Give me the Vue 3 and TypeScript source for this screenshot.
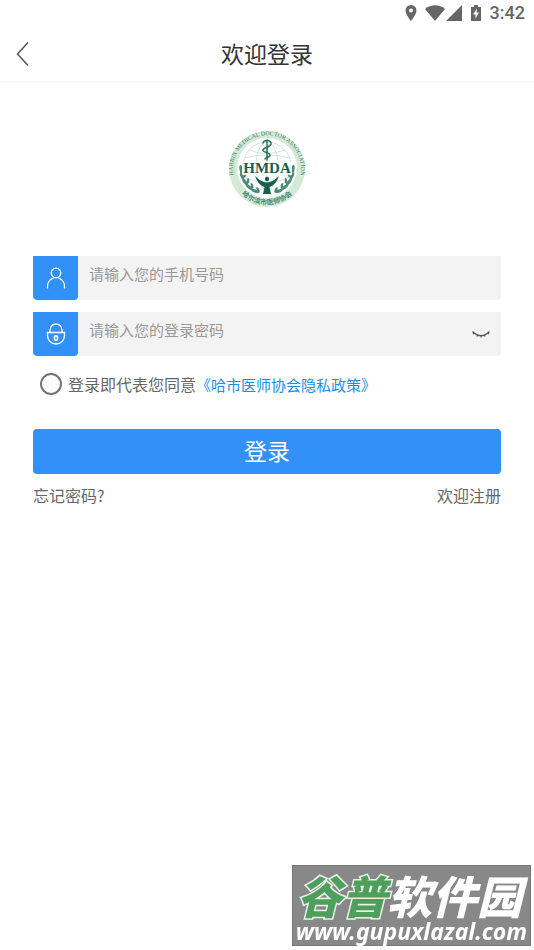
<script setup lang="ts">
import { ref } from 'vue'

const phone = ref('')
const password = ref('')
const agreed = ref(false)
const showPassword = ref(false)

const laurel = [
  { x: 14, y: 40, r: -8 },
  { x: 15, y: 47, r: -22 },
  { x: 18, y: 53, r: -38 },
  { x: 22, y: 58, r: -52 },
  { x: 28, y: 62, r: -68 },
]
</script>

<template>
  <div class="page">
    <div class="status">
      <svg class="pin" viewBox="0 0 12 16" aria-hidden="true">
        <path fill-rule="evenodd" d="M6 0a5.500 5.500 0 0 0-5.500 5.500C.5 9.500 6 16 6 16s5.500-6.500 5.500-10.500A5.500 5.500 0 0 0 6 0zm0 3.600a2 2 0 1 1 0 4 2 2 0 0 1 0-4z" />
      </svg>
      <svg class="wifi" viewBox="0 0 20 16" aria-hidden="true"><path d="M0 4C5.500-1 14.500-1 20 4L10 16z" /></svg>
      <svg class="cell" viewBox="0 0 16 16" aria-hidden="true"><path d="M16 0v16H0z" /></svg>
      <svg class="battery" viewBox="0 0 10 16" aria-hidden="true">
        <path fill-rule="evenodd" d="M3 0h4v2h3v14H0V2h3zM6 3.500L2 9.500h2.500v4L8 7.500H5.500z" />
      </svg>
      <span>3:42</span>
    </div>

    <header class="header">
      <button class="back" type="button" aria-label="返回">
        <svg viewBox="0 0 14 26" aria-hidden="true"><path d="M12 1.500L1.500 13 12 24.500" /></svg>
      </button>
      <h1>欢迎登录</h1>
    </header>

    <main class="content">
      <svg class="logo" viewBox="0 0 80 80" role="img" aria-label="HMDA">
        <defs>
          <path id="ring-top" d="M10.400 57A34 34 0 1 1 69.600 57" />
          <path id="ring-bottom" d="M9 58A36 36 0 0 0 71 58" />
        </defs>
        <circle cx="40" cy="40" r="38" fill="#d4ead7" />
        <circle cx="40" cy="39" r="30" fill="#fff" />
        <g fill="none" stroke="#c8dcd4" stroke-width=".8">
          <circle cx="40" cy="37" r="24" />
          <ellipse cx="40" cy="37" rx="11" ry="24" />
          <path d="M40 13v48M17 29q23-6 46 0M16 38h48M20 50q20 6 40 0M22 21q18 7 36 0" />
        </g>
        <text class="ring-text"><textPath href="#ring-top" startOffset="50%" text-anchor="middle">HARBIN MEDICAL DOCTOR ASSOCIATION</textPath></text>
        <text class="ring-cn"><textPath href="#ring-bottom" startOffset="50%" text-anchor="middle">哈尔滨市医师协会</textPath></text>
        <g fill="#4b8b75">
          <g v-for="leaf in laurel" :key="leaf.y">
            <ellipse :cx="leaf.x" :cy="leaf.y" rx="1.600" ry="4" :transform="`rotate(${leaf.r} ${leaf.x} ${leaf.y})`" />
            <ellipse :cx="leaf.x + 3" :cy="leaf.y - 1" rx="1.300" ry="3" :transform="`rotate(${leaf.r + 45} ${leaf.x + 3} ${leaf.y - 1})`" />
            <ellipse :cx="80 - leaf.x" :cy="leaf.y" rx="1.600" ry="4" :transform="`rotate(${-leaf.r} ${80 - leaf.x} ${leaf.y})`" />
            <ellipse :cx="77 - leaf.x" :cy="leaf.y - 1" rx="1.300" ry="3" :transform="`rotate(${-leaf.r - 45} ${77 - leaf.x} ${leaf.y - 1})`" />
          </g>
        </g>
        <g fill="none" stroke="#2a7561" stroke-width="1.500" stroke-linecap="round">
          <path d="M40 11v20" />
          <path d="M36 14c1-4 9-3 8 1s-8 3-8 6 7 2 7 5-5 2-5 4" />
        </g>
        <rect x="15" y="33" width="50" height="13" fill="#fff" opacity=".85" />
        <text class="mark" x="40" y="44" text-anchor="middle">HMDA</text>
        <circle cx="40" cy="50" r="2.200" fill="#17604e" />
        <path d="M28 47q6 6 12 6.500 6-.5 12-6.500-3 9-9.500 11l1.500 7h-8l1.500-7q-6.500-2-9.500-11z" fill="#17604e" />
      </svg>

      <form class="form" @submit.prevent>
        <div class="field">
          <label class="badge" for="phone" aria-label="手机号码">
            <svg viewBox="0 0 20 22" aria-hidden="true">
              <circle cx="10" cy="6" r="4.800" />
              <path d="M1.500 21.500v-1.500a8.500 8.500 0 0 1 6-8.800M18.500 21.500v-1.500a8.500 8.500 0 0 0-6-8.800" />
            </svg>
          </label>
          <input id="phone" v-model="phone" type="tel" placeholder="请输入您的手机号码">
        </div>
        <div class="field">
          <label class="badge" for="password" aria-label="登录密码">
            <svg viewBox="0 0 20 22" aria-hidden="true">
              <path d="M4 9.500V7a6 6 0 0 1 12 0v2.500M1.500 9.500h17v3a8.500 8.500 0 0 1-17 0z" />
              <ellipse cx="10" cy="15" rx="1.600" ry="2.300" stroke-width="1.600" />
            </svg>
          </label>
          <input id="password" v-model="password" :type="showPassword ? 'text' : 'password'" placeholder="请输入您的登录密码">
          <button class="eye" type="button" aria-label="显示密码" @click="showPassword = !showPassword">
            <svg viewBox="0 0 20 10" aria-hidden="true">
              <path d="M1.500 2.500Q10 11 18.500 2.500" />
              <path d="M3.500 4L2 5M6.500 6L6 7.500M10 6.500v2M13.500 6l.5 1.500M16.500 4l1.500 1" />
            </svg>
          </button>
        </div>
        <div class="consent">
          <input id="agree" v-model="agreed" type="checkbox">
          <label for="agree">登录即代表您同意</label><a href="#privacy">《哈市医师协会隐私政策》</a>
        </div>
        <button class="submit" type="submit">登录</button>
      </form>
      <nav class="links">
        <a href="#forgot">忘记密码?</a>
        <a href="#register">欢迎注册</a>
      </nav>
    </main>

    <aside class="watermark">
      <div class="site"><span>谷普</span>软件园</div>
      <div class="url">www.gupuxlazal.com</div>
    </aside>
  </div>
</template>

<style>
body {
  background: #fff;
}
</style>

<style scoped>
.page {
  min-height: 100vh;
  font-family: "Noto Sans CJK SC", sans-serif;
  color: #666;
}
.page * {
  box-sizing: border-box;
}
a {
  color: inherit;
  text-decoration: none;
}
button {
  border: 0;
  padding: 0;
  background: none;
  font: inherit;
}
.status {
  display: flex;
  align-items: center;
  justify-content: flex-end;
  height: 26px;
  padding-right: 9px;
  font: 500 18px/26px Roboto, sans-serif;
}
.status svg {
  height: 16px;
  fill: #666;
}
.pin {
  width: 12px;
  margin-right: 8px;
}
.wifi {
  width: 20px;
  margin-right: 1px;
}
.cell {
  width: 16px;
  margin-right: 9px;
}
.battery {
  width: 10px;
  margin-right: 9px;
}
.header {
  display: grid;
  grid-template-columns: 48px 1fr 48px;
  align-items: center;
  height: 57px;
  border-bottom: 2px solid #f8f8f8;
}
.back {
  display: flex;
  padding-left: 16px;
}
.back svg {
  width: 14px;
  height: 26px;
  fill: none;
  stroke: #555;
  stroke-width: 1.5;
}
h1 {
  margin: 0;
  padding-bottom: 1px;
  text-align: center;
  font-size: 23px;
  line-height: 32px;
  font-weight: 400;
  color: #333;
}
.content {
  display: flex;
  flex-direction: column;
  padding: 46px 33px 0;
}
.logo {
  align-self: center;
  width: 80px;
  height: 80px;
}
.ring-text {
  font: 400 6px "Liberation Serif", serif;
  fill: #3b7f68;
}
.ring-cn {
  font: 700 7px "Noto Sans CJK SC", sans-serif;
  fill: #4b8b75;
}
.mark {
  font: 700 15px "Liberation Serif", serif;
  fill: #17604e;
}
.form {
  display: flex;
  flex-direction: column;
  gap: 12px;
  margin-top: 47px;
}
.field {
  display: flex;
  height: 44px;
  border-radius: 0 0 4px 4px;
  background: #f3f3f3;
  overflow: hidden;
}
.badge {
  display: flex;
  flex: 0 0 45px;
  align-items: center;
  justify-content: center;
  border-radius: 0 0 4px 4px;
  background: #3291f8;
}
.badge svg {
  width: 20px;
  height: 22px;
  fill: none;
  stroke: #fff;
  stroke-width: 1.3;
}
.field input {
  flex: 1;
  min-width: 0;
  border: 0;
  outline: 0;
  padding: 0 11px 9px;
  background: none;
  font: 15px "Noto Sans CJK SC", sans-serif;
  color: #333;
}
.field input::placeholder {
  color: #999;
  opacity: 1;
}
.eye {
  display: flex;
  align-items: center;
  padding: 0 10px;
}
.eye svg {
  width: 20px;
  height: 10px;
  fill: none;
  stroke: #555;
  stroke-width: 1.2;
}
.consent {
  display: flex;
  align-items: center;
  height: 32px;
  padding-left: 7px;
  font-size: 16px;
  white-space: nowrap;
}
.consent input {
  appearance: none;
  width: 22px;
  height: 22px;
  margin: 0 6px 0 0;
  border: 2px solid #757575;
  border-radius: 50%;
}
.consent input:checked {
  border-width: 6px;
  border-color: #3291f8;
}
.consent a {
  font-size: 15px;
  color: #1890e6;
}
.submit {
  height: 45px;
  margin-top: 17px;
  padding-bottom: 3px;
  border-radius: 4px;
  background: #3291f8;
  color: #fff;
  font-size: 23px;
  line-height: 40px;
}
.links {
  display: flex;
  justify-content: space-between;
  margin-top: 9px;
  font-size: 16px;
  line-height: 24px;
}
.watermark {
  position: fixed;
  right: 3px;
  bottom: 4px;
  width: 239px;
  height: 81px;
  border: 1px solid #777;
  background: #888;
  color: #fff;
  white-space: nowrap;
}
.site {
  height: 52px;
  padding-left: 4px;
  font-size: 45px;
  line-height: 58px;
  font-weight: 900;
  font-style: italic;
}
.site span {
  color: #4e9f5c;
  -webkit-text-stroke: 3px #e8f0e8;
  paint-order: stroke fill;
}
.url {
  text-align: center;
  font: italic 700 23px/26px "Noto Sans", sans-serif;
}
</style>
